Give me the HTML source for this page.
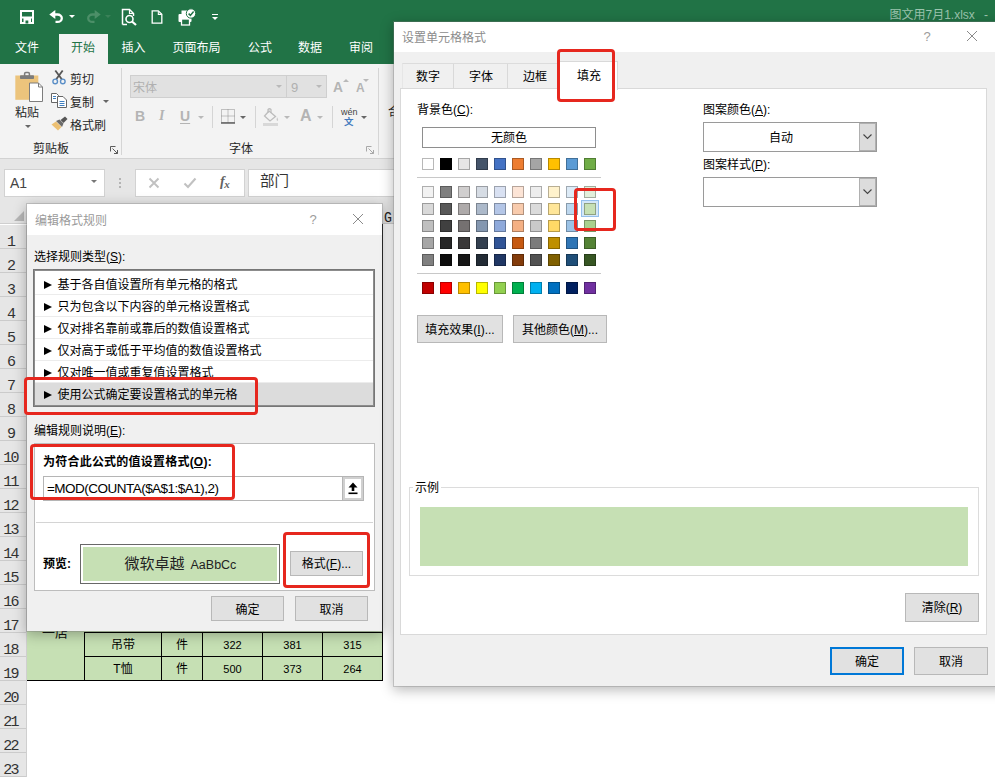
<!DOCTYPE html>
<html lang="zh-CN">
<head>
<meta charset="utf-8">
<title>Excel</title>
<style>
*{box-sizing:border-box;margin:0;padding:0}
html,body{width:995px;height:777px;overflow:hidden;background:#fff}
body{position:relative;font-family:"Liberation Sans","Noto Sans CJK SC",sans-serif;font-size:12px;color:#262626}
.a{position:absolute}
.t{position:absolute;white-space:nowrap;line-height:1}
svg{position:absolute;overflow:visible}
u{text-decoration:underline;text-underline-offset:1px}

/* ---------- top bar ---------- */
#gbar{left:0;top:0;width:995px;height:64px;background:#217346}
.tab{position:absolute;top:41px;font-size:12px;color:#fff;line-height:14px;white-space:nowrap}
#hometab{left:59px;top:34px;width:49px;height:31px;background:#f3f3f3}
/* ---------- ribbon ---------- */
#ribbon{left:0;top:64px;width:995px;height:95px;background:#f3f3f3;border-bottom:1px solid #d2d2d2}
.rl{position:absolute;font-size:12px;line-height:14px;margin-top:1.500px;color:#262626;white-space:nowrap}
.vsep{position:absolute;width:1px;background:#d5d5d5}
.dd{position:absolute;width:0;height:0;border-left:3px solid transparent;border-right:3px solid transparent;border-top:3px solid #666}
.ddl{border-top-color:#b9b9b9}
/* ---------- formula bar ---------- */
#fbar{left:0;top:159px;width:995px;height:41px;background:#e6e6e6}
.wbox{position:absolute;top:169px;height:27.500px;background:#fff;border:1px solid #d2d2d2}
/* ---------- sheet ---------- */
#colhdr{left:0;top:200px;width:995px;height:24px;background:#e6e6e6;border-bottom:1px solid #cfcfcf}
#rowhdr{left:0;top:225px;width:27px;height:553px;background:#e6e6e6;border-right:1px solid #cfcfcf}
.rn{position:absolute;left:0;width:26px;height:24px;padding-right:5px;overflow:hidden;border-bottom:1px solid #cbcbcb;text-align:center;font-family:"Liberation Mono","Noto Sans Mono CJK SC",monospace;font-size:15px;line-height:36px;color:#333;letter-spacing:-1.800px}
.cell{position:absolute;height:25px;background:#c6e0b4;border:1px solid #000;text-align:center;font-size:12px;line-height:25px;color:#000}
.num{font-size:11px}

/* ---------- dialogs ---------- */
.dlg{position:absolute;background:#f0f0f0;box-shadow:0 0 0 1px rgba(125,125,125,.32),0 3px 12px 1px rgba(0,0,0,.28)}
.dt{position:absolute;left:0;top:0;right:0;background:#fff}
.d1{font-family:"Liberation Sans","Noto Sans CJK SC",sans-serif;font-size:12px;color:#000}
.btn{position:absolute;background:#e1e1e1;border:1px solid #b8b8b8;text-align:center;font-size:12px;color:#000;white-space:nowrap}
.li{position:absolute;left:1px;right:1px;height:22px;border-bottom:1px solid #ececec;line-height:24px;font-size:12px;white-space:nowrap;color:#000}
.li i{position:absolute;left:9px;top:7.500px;width:0;height:0;border-top:4px solid transparent;border-bottom:4px solid transparent;border-left:8px solid #000}
.li span{position:absolute;left:22.500px;top:0}
.red{position:absolute;border:3px solid #e6271e;border-radius:4px}
.sw{position:absolute;width:12px;height:12px;border:1px solid rgba(0,0,0,.28)}
#d2 .t{margin-top:1px}
</style>
</head>
<body>

<!-- ================= TITLE / TABS ================= -->
<div id="gbar" class="a"></div>
<div class="t" style="left:889.500px;top:8px;font-size:12px;color:#9cc4ae;line-height:14px">图文用7月1.xlsx</div>
<div class="t" style="left:984px;top:8px;font-size:12px;color:#9cc4ae;line-height:14px">-</div>

<div id="hometab" class="a"></div>
<div class="tab" style="left:15px">文件</div>
<div class="tab" style="left:71px;color:#217346">开始</div>
<div class="tab" style="left:121.500px">插入</div>
<div class="tab" style="left:172.500px">页面布局</div>
<div class="tab" style="left:248px">公式</div>
<div class="tab" style="left:298px">数据</div>
<div class="tab" style="left:349px">审阅</div>


<!-- save -->
<svg style="left:20px;top:10px" width="14" height="14" viewBox="0 0 14 14"><rect x="1" y="1" width="12" height="12" fill="none" stroke="#fff" stroke-width="2"/><rect x="1" y="6.500" width="12" height="2" fill="#fff"/><rect x="3.500" y="8" width="7.500" height="5" fill="#fff"/><rect x="5.500" y="10.500" width="2.800" height="3" fill="#217346"/></svg>
<!-- undo -->
<svg style="left:48.500px;top:10px" width="16" height="13" viewBox="0 0 16 13"><path d="M3 4.500 H8.500 A4.300 3.700 0 0 1 8.500 11.900 H6.500" fill="none" stroke="#fff" stroke-width="2.300"/><path d="M0.300 4.500 L6.300 0 V9 Z" fill="#fff"/></svg>
<div class="dd" style="left:69px;top:15px;border-top-color:#fff"></div>
<!-- redo (disabled) -->
<svg style="left:85px;top:10px" width="16" height="13" viewBox="0 0 16 13"><path d="M13 4.500 H7.500 A4.300 3.700 0 0 0 7.500 11.900 H9.500" fill="none" stroke="#4c8f68" stroke-width="2.300"/><path d="M15.700 4.500 L9.700 0 V9 Z" fill="#4c8f68"/></svg>
<div class="dd" style="left:105px;top:15px;border-top-color:#3a8158"></div>
<!-- print preview -->
<svg style="left:121px;top:8px" width="17" height="18" viewBox="0 0 17 18"><path d="M1.5 16.5 V1.5 H8.5 L12.5 5.5 V8" fill="none" stroke="#fff" stroke-width="1.5"/><path d="M8.5 1.5 V5.5 H12.5" fill="none" stroke="#fff" stroke-width="1.2"/><path d="M1.5 16.5 H6" stroke="#fff" stroke-width="1.5"/><circle cx="8.5" cy="11" r="3.5" fill="none" stroke="#fff" stroke-width="1.6"/><path d="M11 13.5 L15 17" stroke="#fff" stroke-width="2.2"/></svg>
<!-- new doc -->
<svg style="left:151px;top:10px" width="12" height="14" viewBox="0 0 13 16"><path d="M1 1 H8 L12 5 V15 H1 Z" fill="none" stroke="#fff" stroke-width="1.5"/><path d="M8 1 V5 H12" fill="none" stroke="#fff" stroke-width="1.2"/></svg>
<!-- printer check -->
<svg style="left:177.500px;top:7.500px" width="19" height="18" viewBox="0 0 19 18"><rect x="0.5" y="6" width="13" height="8" rx="1" fill="#fff"/><rect x="3.5" y="11" width="8" height="6" fill="#217346" stroke="#fff" stroke-width="1.3"/><rect x="3.5" y="2.5" width="7" height="4" fill="#fff"/><circle cx="13" cy="5.5" r="4.7" fill="#fff" stroke="#217346" stroke-width="1"/><path d="M10.6 5.6 L12.4 7.4 L15.6 3.6" fill="none" stroke="#217346" stroke-width="1.5"/></svg>
<!-- customise -->
<div class="a" style="left:211.500px;top:14px;width:6px;height:1px;background:#fff"></div>
<div class="dd" style="left:211.500px;top:16.500px;border-top-color:#fff;border-top-width:3.500px"></div>


<!-- ================= RIBBON ================= -->
<div id="ribbon" class="a"></div>

<!-- paste icon -->
<svg style="left:12px;top:71px" width="32" height="33" viewBox="0 0 32 33"><rect x="3.300" y="4.500" width="23" height="24.300" fill="#ecc47c"/><rect x="8" y="4.300" width="14" height="3.800" rx="0.800" fill="#7c7c7c"/><rect x="12.600" y="1.600" width="4.800" height="4" rx="1.200" fill="none" stroke="#7c7c7c" stroke-width="1.500"/><path d="M17.500 12 H26.500 L30.500 16 V30.500 H17.500 Z" fill="#fff" stroke="#7d7d7d" stroke-width="1"/><path d="M26.500 12 V16 H30.500" fill="none" stroke="#7d7d7d" stroke-width="1"/></svg>
<div class="rl" style="left:15px;top:104px">粘贴</div>
<div class="dd" style="left:25px;top:125px"></div>
<!-- cut -->
<svg style="left:51px;top:70px" width="16" height="15" viewBox="0 0 16 15"><path d="M4.300 0.500 L10.800 9.300 M11.700 0.500 L5.200 9.300" stroke="#555" stroke-width="1.800" fill="none"/><circle cx="4.200" cy="11.400" r="2.300" fill="none" stroke="#5b8fc7" stroke-width="1.400"/><circle cx="11.800" cy="11.400" r="2.300" fill="none" stroke="#5b8fc7" stroke-width="1.400"/></svg>
<div class="rl" style="left:70px;top:71px">剪切</div>
<!-- copy -->
<svg style="left:51px;top:93px" width="16" height="15" viewBox="0 0 16 15"><path d="M0.5 0.5 H5.500 L7.500 2.500 V9.500 H0.500 Z" fill="#fff" stroke="#666" stroke-width="1"/><path d="M6.500 3.500 H12 L15.500 7 V14.500 H6.500 Z" fill="#fff" stroke="#666" stroke-width="1"/><path d="M8.500 8.500 H13.500 M8.500 10.500 H13.500 M8.500 12.500 H13.500" stroke="#3f7fc0" stroke-width="1"/><path d="M2 3.500 H5 M2 5.500 H5" stroke="#3f7fc0" stroke-width="1"/></svg>
<div class="rl" style="left:70px;top:94px">复制</div>
<div class="dd" style="left:103px;top:100px"></div>
<!-- format painter -->
<svg style="left:51px;top:116px" width="17" height="15" viewBox="0 0 17 15"><path d="M9.500 4 L14 0.500 L16.500 3 L12.500 7 Z" fill="#555"/><path d="M5 5 L8.500 3.500 L12.500 7.500 L11 11 Z" fill="#6b6b6b"/><path d="M0.500 8.500 L5 5.500 L10.500 11 L7 14.500 Z" fill="#ecc073"/></svg>
<div class="rl" style="left:70px;top:117px">格式刷</div>
<div class="rl" style="left:33px;top:140px">剪贴板</div>
<svg style="left:110px;top:146px" width="8" height="8" viewBox="0 0 8 8"><path d="M0.500 5.500 V0.500 H5.500 M2.500 2.500 L7.500 7.500 M7.500 4 V7.500 H4" fill="none" stroke="#5a5a5a" stroke-width="1"/></svg>
<div class="vsep" style="left:121px;top:68px;height:87px"></div>

<!-- font group (disabled) -->
<div class="a" style="left:130px;top:75px;width:157px;height:23px;background:#e1e1e1;border:1px solid #cfcfcf"></div>
<div class="rl" style="left:133px;top:79px;color:#b0b0b0">宋体</div>
<div class="dd ddl" style="left:276px;top:85px"></div>
<div class="a" style="left:286px;top:75px;width:41px;height:23px;background:#e1e1e1;border:1px solid #cfcfcf"></div>
<div class="rl" style="left:291px;top:79px;color:#b0b0b0;font-size:13px">9</div>
<div class="dd ddl" style="left:316px;top:85px"></div>
<div class="t" style="left:333px;top:79px;font-size:15px;font-weight:bold;color:#b4b4b4;transform:scaleX(.92);transform-origin:left">A</div>
<div class="a" style="left:342.500px;top:78.500px;width:0;height:0;border-left:3px solid transparent;border-right:3px solid transparent;border-bottom:3.500px solid #b9b9b9"></div>
<div class="t" style="left:355.500px;top:81px;font-size:13px;font-weight:bold;color:#b4b4b4;transform:scaleX(.92);transform-origin:left">A</div>
<div class="a" style="left:362.500px;top:78.500px;width:0;height:0;border-left:3px solid transparent;border-right:3px solid transparent;border-top:3.500px solid #b9b9b9"></div>

<div class="t" style="left:135px;top:109px;font-size:14px;font-weight:bold;color:#b4b4b4">B</div>
<div class="t" style="left:159px;top:109px;font-size:14px;font-style:italic;font-family:'Liberation Serif',serif;font-weight:bold;color:#b4b4b4">I</div>
<div class="t" style="left:180px;top:109px;font-size:14px;font-weight:bold;color:#b4b4b4;text-decoration:underline;text-underline-offset:2px">U</div>
<div class="dd ddl" style="left:198px;top:116px"></div>
<div class="vsep" style="left:212px;top:106px;height:22px"></div>
<svg style="left:221px;top:109px" width="14" height="15" viewBox="0 0 14 15"><path d="M0.500 0.500 H13.500 V13.500 H0.500 Z M7 0.500 V13.500 M0.500 7 H13.500" fill="none" stroke="#8d8d8d" stroke-width="1" stroke-dasharray="1 1"/><path d="M0 14 H14" stroke="#555" stroke-width="1.4"/></svg>
<div class="dd" style="left:240px;top:116px"></div>
<div class="vsep" style="left:255px;top:106px;height:22px"></div>
<svg style="left:263px;top:108px" width="17" height="18" viewBox="0 0 17 18"><path d="M6 3 L12.500 8.500 L7 13 L1.500 8 Z" fill="none" stroke="#bdbdbd" stroke-width="1.300"/><path d="M5 5 V1.500 Q6.500 0 8 1.500 V5" fill="none" stroke="#bdbdbd" stroke-width="1.200"/><path d="M14 9 Q16 12 14.500 13 Q13 12 14 9 Z" fill="#c9c9c9"/><rect x="0" y="15" width="15" height="3" fill="#d8d8d8"/></svg>
<div class="dd ddl" style="left:284px;top:116px"></div>
<div class="t" style="left:300px;top:108px;font-size:16px;font-weight:bold;color:#b4b4b4">A</div>
<div class="dd ddl" style="left:317px;top:116px"></div>
<div class="vsep" style="left:332px;top:106px;height:22px"></div>
<div class="t" style="left:341px;top:108px;font-size:9px;color:#444">wén</div>
<div class="t" style="left:344px;top:116.500px;font-size:9.500px;font-weight:bold;color:#4279bd">文</div>
<div class="dd" style="left:361px;top:116px"></div>
<div class="rl" style="left:229px;top:140px">字体</div>
<svg style="left:366px;top:146px" width="8" height="8" viewBox="0 0 8 8"><path d="M0.500 5.500 V0.500 H5.500 M2.500 2.500 L7.500 7.500 M7.500 4 V7.500 H4" fill="none" stroke="#a8a8a8" stroke-width="1"/></svg>
<div class="vsep" style="left:378px;top:68px;height:87px"></div>
<div class="a" style="left:388px;top:102.500px;width:6px;height:16px;overflow:hidden"><div class="rl" style="left:0;top:1px">合</div></div>


<!-- ================= FORMULA BAR ================= -->
<div id="fbar" class="a"></div>

<div class="wbox" style="left:4px;width:101px"></div>
<div class="t" style="left:10px;top:176px;font-size:14px;color:#444">A1</div>
<div class="dd" style="left:90.500px;top:180px;border-top-color:#777;border-left-width:3.500px;border-right-width:3.500px;border-top-width:3.500px"></div>
<div class="a" style="left:119px;top:178px;width:2px;height:2px;background:#b4b4b4;box-shadow:0 4px 0 #b4b4b4,0 8px 0 #b4b4b4"></div>
<div class="wbox" style="left:135px;width:110px"></div>
<svg style="left:148px;top:177px" width="12" height="12" viewBox="0 0 12 12"><path d="M1.5 1.5 L10.5 10.5 M10.5 1.5 L1.5 10.5" stroke="#c1c1c1" stroke-width="1.900" fill="none"/></svg>
<svg style="left:183px;top:177px" width="14" height="12" viewBox="0 0 14 12"><path d="M1.5 6.5 L5 10 L12.5 1.5" stroke="#c1c1c1" stroke-width="2.100" fill="none"/></svg>
<div class="t" style="left:220px;top:175px;font-family:'Liberation Serif',serif;font-style:italic;font-weight:bold;font-size:14px;color:#636363">f<span style="font-size:11px;position:relative;top:1.500px;margin-left:-0.500px">x</span></div>
<div class="wbox" style="left:248px;width:760px"></div>
<div class="t" style="left:260px;top:174px;font-size:14.500px;color:#333">部门</div>


<!-- ================= SHEET ================= -->
<div id="colhdr" class="a"></div>
<div id="rowhdr" class="a"></div>
<div class="rn" style="top:225px">1</div>
<div class="rn" style="top:249px">2</div>
<div class="rn" style="top:273px">3</div>
<div class="rn" style="top:297px">4</div>
<div class="rn" style="top:321px">5</div>
<div class="rn" style="top:345px">6</div>
<div class="rn" style="top:369px">7</div>
<div class="rn" style="top:393px">8</div>
<div class="rn" style="top:417px">9</div>
<div class="rn" style="top:441px">10</div>
<div class="rn" style="top:465px">11</div>
<div class="rn" style="top:489px">12</div>
<div class="rn" style="top:513px">13</div>
<div class="rn" style="top:537px">14</div>
<div class="rn" style="top:561px">15</div>
<div class="rn" style="top:585px">16</div>
<div class="rn" style="top:609px">17</div>
<div class="rn" style="top:633px">18</div>
<div class="rn" style="top:657px">19</div>
<div class="rn" style="top:681px">20</div>
<div class="rn" style="top:705px">21</div>
<div class="rn" style="top:729px">22</div>
<div class="rn" style="top:753px">23</div>
<svg style="left:12.500px;top:210px" width="12" height="12" viewBox="0 0 12 12"><path d="M11 1 L11 11 L1 11 Z" fill="#b7b7b7"/></svg>
<div class="t" style="left:384px;top:211px;font-family:'Liberation Mono',monospace;font-size:15px;color:#222;transform:scaleX(.88);transform-origin:left">G</div>
<!-- table rows 18/19 -->
<div class="a" style="left:27px;top:224px;width:356px;height:457px;background:#c6e0b4;border:1px solid #000;border-left:none;border-top:none"></div>
<div class="t" style="left:42px;top:626px;font-size:13px;color:#111">一店</div>
<div class="cell" style="left:84px;top:632px;width:78px">吊带</div>
<div class="cell" style="left:161px;top:632px;width:42px">件</div>
<div class="cell num" style="left:202px;top:632px;width:61px">322</div>
<div class="cell num" style="left:262px;top:632px;width:61px">381</div>
<div class="cell num" style="left:322px;top:632px;width:61px">315</div>
<div class="cell" style="left:84px;top:656px;width:78px">T恤</div>
<div class="cell" style="left:161px;top:656px;width:42px">件</div>
<div class="cell num" style="left:202px;top:656px;width:61px">500</div>
<div class="cell num" style="left:262px;top:656px;width:61px">373</div>
<div class="cell num" style="left:322px;top:656px;width:61px">264</div>


<!-- ================= DIALOG 1 ================= -->

<div class="dlg d1" style="left:27px;top:204px;width:355px;height:427px">
  <div class="dt" style="height:31px"></div>
  <div class="t" style="left:8px;top:11px;font-size:12px;color:#9a9a9a">编辑格式规则</div>
  <div class="t" style="left:282.500px;top:8.500px;font-size:13px;color:#9c9c9c">?</div>
  <svg style="left:326px;top:10px" width="10" height="10" viewBox="0 0 10 10"><path d="M0 0 L10 10 M10 0 L0 10" stroke="#8a8a8a" stroke-width="1" fill="none"/></svg>
  <div class="t" style="left:7px;top:47px">选择规则类型(<u>S</u>):</div>
  <div class="a" style="left:6px;top:65px;width:342px;height:138px;background:#fff;border:1px solid #767676;box-shadow:inset 0 0 0 1px #8c8c8c">
<div class="li" style="top:3px"><i></i><span>基于各自值设置所有单元格的格式</span></div>
<div class="li" style="top:25px"><i></i><span>只为包含以下内容的单元格设置格式</span></div>
<div class="li" style="top:47px"><i></i><span>仅对排名靠前或靠后的数值设置格式</span></div>
<div class="li" style="top:69px"><i></i><span>仅对高于或低于平均值的数值设置格式</span></div>
<div class="li" style="top:91px"><i></i><span>仅对唯一值或重复值设置格式</span></div>
<div class="li" style="top:113px;background:#dcdcdc;border-bottom-color:#dcdcdc"><i></i><span>使用公式确定要设置格式的单元格</span></div>
  </div>
  <div class="t" style="left:7px;top:221px">编辑规则说明(<u>E</u>):</div>
  <div class="a" style="left:7px;top:239px;width:341px;height:148px;background:#fff;border:1px solid #bdbdbd"></div>
  <div class="t" style="left:16px;top:252px;font-weight:bold;letter-spacing:0.220px">为符合此公式的值设置格式(<u>O</u>):</div>
  <div class="a" style="left:16px;top:272px;width:321px;height:25px;background:#fff;border:1px solid #b5b5b5"></div>
  <div class="t" id="fml" style="left:20px;top:277.500px;font-size:13.500px;letter-spacing:-0.520px">=MOD(COUNTA($A$1:$A1),2)</div>
  <div class="a" style="left:315px;top:272px;width:22px;height:25px;background:#fff;border:3px solid #d0d0d0;outline:1px solid #b5b5b5;outline-offset:-1px"></div>
  <svg style="left:320px;top:278px" width="12" height="13" viewBox="0 0 12 13"><path d="M6 0.500 L10.500 5.500 H7.300 V9 H4.700 V5.500 H1.500 Z" fill="#000"/><rect x="1.500" y="10.500" width="9" height="1.600" fill="#000"/></svg>
  <div class="a" style="left:9px;top:318px;width:337px;height:1px;background:#d4d4d4"></div>
  <div class="t" style="left:16px;top:354px;font-weight:bold">预览:</div>
  <div class="a" style="left:53px;top:340px;width:200px;height:40px;background:#c6e0b4;border:1px solid #686868;box-shadow:inset 0 0 0 2px #fff"></div>
  <div class="t" id="pv" style="left:97.500px;top:352px;font-size:15px;color:#222">微软卓越<span style="font-size:12.500px;margin-left:6px">AaBbCc</span></div>
  <div class="btn" style="left:263px;top:347px;width:73px;height:25px;line-height:25px">格式(<u>F</u>)...</div>
  <div class="btn" style="left:184px;top:392px;width:73px;height:25px;line-height:26px">确定</div>
  <div class="btn" style="left:268px;top:392px;width:73px;height:25px;line-height:26px">取消</div>
</div>
<div class="red" style="left:24px;top:376.500px;width:233.500px;height:38px"></div>
<div class="red" style="left:30px;top:443.500px;width:204.500px;height:56.500px"></div>
<div class="red" style="left:282.500px;top:532px;width:87.500px;height:56px"></div>


<!-- ================= DIALOG 2 ================= -->

<div id="d2" class="dlg d1" style="left:394px;top:22px;width:620px;height:664px">
  <div class="dt" style="height:30px"></div>
  <div class="t" style="left:8px;top:8.500px;font-size:12px;color:#8c8c8c">设置单元格格式</div>
  <div class="t" style="left:529.500px;top:6.500px;font-size:13px;color:#9c9c9c">?</div>
  <svg style="left:573px;top:9px" width="10" height="10" viewBox="0 0 10 10"><path d="M0 0 L10 10 M10 0 L0 10" stroke="#8a8a8a" stroke-width="1" fill="none"/></svg>
  <!-- tab strip -->
  <div class="a" style="left:8px;top:41px;width:157px;height:26px;border:1px solid #dcdcdc;border-left-color:#e6e6e6;border-bottom:none;background:#f0f0f0"></div>
  <div class="a" style="left:59px;top:42px;width:1px;height:24px;background:#d9d9d9"></div>
  <div class="a" style="left:113px;top:42px;width:1px;height:24px;background:#d9d9d9"></div>
  <div class="t" style="left:22px;top:48px">数字</div>
  <div class="t" style="left:75px;top:48px">字体</div>
  <div class="t" style="left:129px;top:48px">边框</div>
  <!-- panel -->
  <div class="a" style="left:6px;top:66px;width:587px;height:547px;background:#fff;border:1px solid #d9d9d9"></div>
  <div class="a" style="left:164px;top:39px;width:60px;height:29px;background:#fff;border:1px solid #d9d9d9;border-bottom:none"></div>
  <div class="t" style="left:183px;top:47px">填充</div>

  <div class="t" style="left:23px;top:81px">背景色(<u>C</u>):</div>
  <div class="a" style="left:28px;top:105px;width:174px;height:21px;background:#fff;border:1px solid #8e8e8e;text-align:center;line-height:21px">无颜色</div>
  <div class="a" style="left:23px;top:155px;width:184px;height:1px;background:#c8c8c8"></div>
  <div class="a" style="left:23px;top:251px;width:184px;height:1px;background:#c8c8c8"></div>
  <div class="a" style="left:187px;top:178px;width:18px;height:17px;background:#d3e7f8;border:1px solid #94bfec"></div>
<div class="sw" style="left:28px;top:136px;background:#FFFFFF"></div><div class="sw" style="left:46px;top:136px;background:#000000"></div><div class="sw" style="left:64px;top:136px;background:#E7E6E6"></div><div class="sw" style="left:82px;top:136px;background:#44546A"></div><div class="sw" style="left:100px;top:136px;background:#4472C4"></div><div class="sw" style="left:118px;top:136px;background:#ED7D31"></div><div class="sw" style="left:136px;top:136px;background:#A5A5A5"></div><div class="sw" style="left:154px;top:136px;background:#FFC000"></div><div class="sw" style="left:172px;top:136px;background:#5B9BD5"></div><div class="sw" style="left:190px;top:136px;background:#70AD47"></div>
<div class="sw" style="left:28px;top:164px;background:#F2F2F2"></div><div class="sw" style="left:46px;top:164px;background:#7F7F7F"></div><div class="sw" style="left:64px;top:164px;background:#D0CECE"></div><div class="sw" style="left:82px;top:164px;background:#D6DCE4"></div><div class="sw" style="left:100px;top:164px;background:#D9E1F2"></div><div class="sw" style="left:118px;top:164px;background:#FCE4D6"></div><div class="sw" style="left:136px;top:164px;background:#EDEDED"></div><div class="sw" style="left:154px;top:164px;background:#FFF2CC"></div><div class="sw" style="left:172px;top:164px;background:#DDEBF7"></div><div class="sw" style="left:190px;top:164px;background:#E2EFDA"></div>
<div class="sw" style="left:28px;top:181px;background:#D9D9D9"></div><div class="sw" style="left:46px;top:181px;background:#595959"></div><div class="sw" style="left:64px;top:181px;background:#AEAAAA"></div><div class="sw" style="left:82px;top:181px;background:#ACB9CA"></div><div class="sw" style="left:100px;top:181px;background:#B4C6E7"></div><div class="sw" style="left:118px;top:181px;background:#F8CBAD"></div><div class="sw" style="left:136px;top:181px;background:#DBDBDB"></div><div class="sw" style="left:154px;top:181px;background:#FFE699"></div><div class="sw" style="left:172px;top:181px;background:#BDD7EE"></div><div class="sw" style="left:190px;top:181px;background:#C6E0B4"></div>
<div class="sw" style="left:28px;top:198px;background:#BFBFBF"></div><div class="sw" style="left:46px;top:198px;background:#404040"></div><div class="sw" style="left:64px;top:198px;background:#757171"></div><div class="sw" style="left:82px;top:198px;background:#8497B0"></div><div class="sw" style="left:100px;top:198px;background:#8EA9DB"></div><div class="sw" style="left:118px;top:198px;background:#F4B084"></div><div class="sw" style="left:136px;top:198px;background:#C9C9C9"></div><div class="sw" style="left:154px;top:198px;background:#FFD966"></div><div class="sw" style="left:172px;top:198px;background:#9BC2E6"></div><div class="sw" style="left:190px;top:198px;background:#A9D08E"></div>
<div class="sw" style="left:28px;top:215px;background:#A6A6A6"></div><div class="sw" style="left:46px;top:215px;background:#262626"></div><div class="sw" style="left:64px;top:215px;background:#3A3838"></div><div class="sw" style="left:82px;top:215px;background:#333F4F"></div><div class="sw" style="left:100px;top:215px;background:#305496"></div><div class="sw" style="left:118px;top:215px;background:#C65911"></div><div class="sw" style="left:136px;top:215px;background:#7B7B7B"></div><div class="sw" style="left:154px;top:215px;background:#BF8F00"></div><div class="sw" style="left:172px;top:215px;background:#2F75B5"></div><div class="sw" style="left:190px;top:215px;background:#548235"></div>
<div class="sw" style="left:28px;top:232px;background:#808080"></div><div class="sw" style="left:46px;top:232px;background:#0D0D0D"></div><div class="sw" style="left:64px;top:232px;background:#161616"></div><div class="sw" style="left:82px;top:232px;background:#222B35"></div><div class="sw" style="left:100px;top:232px;background:#203764"></div><div class="sw" style="left:118px;top:232px;background:#833C0B"></div><div class="sw" style="left:136px;top:232px;background:#525252"></div><div class="sw" style="left:154px;top:232px;background:#806000"></div><div class="sw" style="left:172px;top:232px;background:#1F4E78"></div><div class="sw" style="left:190px;top:232px;background:#375623"></div>
<div class="sw" style="left:28px;top:260px;background:#C00000"></div><div class="sw" style="left:46px;top:260px;background:#FF0000"></div><div class="sw" style="left:64px;top:260px;background:#FFC000"></div><div class="sw" style="left:82px;top:260px;background:#FFFF00"></div><div class="sw" style="left:100px;top:260px;background:#92D050"></div><div class="sw" style="left:118px;top:260px;background:#00B050"></div><div class="sw" style="left:136px;top:260px;background:#00B0F0"></div><div class="sw" style="left:154px;top:260px;background:#0070C0"></div><div class="sw" style="left:172px;top:260px;background:#002060"></div><div class="sw" style="left:190px;top:260px;background:#7030A0"></div>
  <div class="btn" style="left:23px;top:292.500px;width:86px;height:28px;line-height:28px">填充效果(<u>I</u>)...</div>
  <div class="btn" style="left:119px;top:292.500px;width:94px;height:28px;line-height:28px">其他颜色(<u>M</u>)...</div>

  <div class="t" style="left:309px;top:81px">图案颜色(<u>A</u>):</div>
  <div class="a" style="left:309px;top:100px;width:174px;height:30px;background:#fff;border:1px solid #9a9a9a;line-height:30px;text-align:center;padding-right:18px">自动</div>
  <div class="a" style="left:465px;top:101px;width:17px;height:28px;background:#dcdcdc;border:1px solid #b0b0b0"></div>
  <svg style="left:469px;top:112px" width="9" height="6" viewBox="0 0 9 6"><path d="M0.500 0.500 L4.500 4.500 L8.500 0.500" fill="none" stroke="#444" stroke-width="1.100"/></svg>
  <div class="t" style="left:309px;top:136px">图案样式(<u>P</u>):</div>
  <div class="a" style="left:309px;top:155px;width:174px;height:30px;background:#fff;border:1px solid #9a9a9a"></div>
  <div class="a" style="left:465px;top:156px;width:17px;height:28px;background:#dcdcdc;border:1px solid #b0b0b0"></div>
  <svg style="left:469px;top:167px" width="9" height="6" viewBox="0 0 9 6"><path d="M0.500 0.500 L4.500 4.500 L8.500 0.500" fill="none" stroke="#444" stroke-width="1.100"/></svg>

  <!-- sample -->
  <div class="a" style="left:15px;top:465px;width:570px;height:89px;border:1px solid #dcdcdc"></div>
  <div class="t" style="left:19px;top:459px;background:#fff;padding:0 2px">示例</div>
  <div class="a" style="left:26px;top:485px;width:548px;height:59px;background:#c6e0b4"></div>
  <div class="btn" style="left:511px;top:571px;width:74px;height:29px;line-height:29px">清除(<u>R</u>)</div>
  <div class="btn" style="left:436px;top:625px;width:74px;height:28px;line-height:26px;border:2px solid #0078d7">确定</div>
  <div class="btn" style="left:520px;top:625px;width:74px;height:28px;line-height:28px">取消</div>
</div>
<div class="red" style="left:557px;top:49px;width:58px;height:52.500px"></div>
<div class="red" style="left:574px;top:187.500px;width:42px;height:43.500px"></div>


</body>
</html>
